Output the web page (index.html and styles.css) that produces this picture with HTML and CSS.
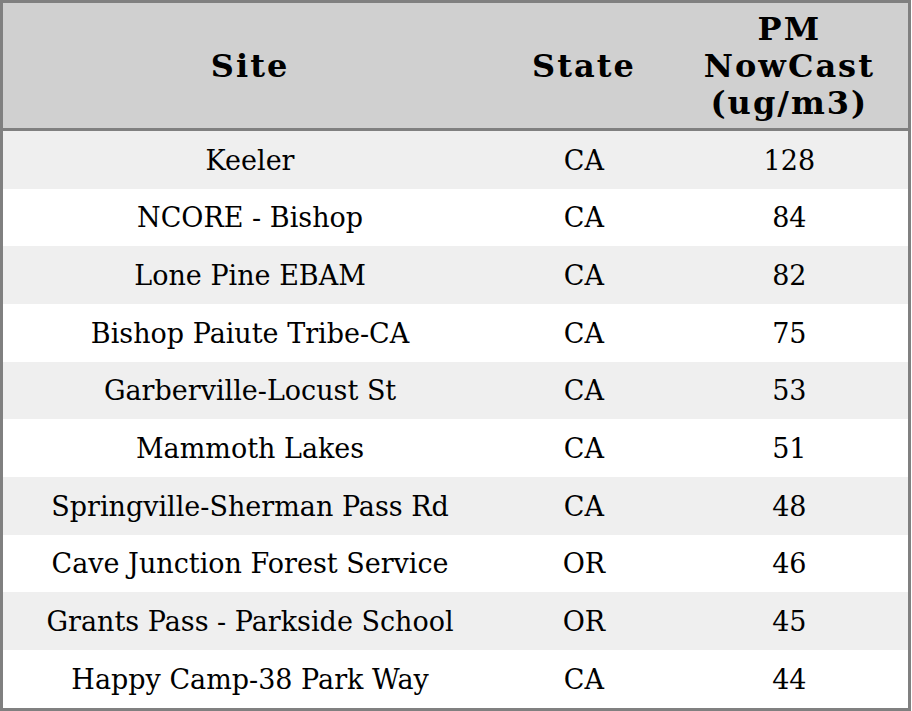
FILE: index.html
```html
<!DOCTYPE html>
<html>
<head>
<meta charset="utf-8">
<link rel="stylesheet" href="styles.css">
</head>
<body>
<table class="aq">
  <colgroup>
    <col class="c-site">
    <col class="c-state">
    <col class="c-pm">
  </colgroup>
  <thead>
    <tr><th>Site</th><th>State</th><th>PM<br>NowCast<br>(ug/m3)</th></tr>
  </thead>
  <tbody>
    <tr><td>Keeler</td><td>CA</td><td>128</td></tr>
    <tr><td>NCORE - Bishop</td><td>CA</td><td>84</td></tr>
    <tr><td>Lone Pine EBAM</td><td>CA</td><td>82</td></tr>
    <tr><td>Bishop Paiute Tribe-CA</td><td>CA</td><td>75</td></tr>
    <tr><td>Garberville-Locust St</td><td>CA</td><td>53</td></tr>
    <tr><td>Mammoth Lakes</td><td>CA</td><td>51</td></tr>
    <tr><td>Springville-Sherman Pass Rd</td><td>CA</td><td>48</td></tr>
    <tr><td>Cave Junction Forest Service</td><td>OR</td><td>46</td></tr>
    <tr><td>Grants Pass - Parkside School</td><td>OR</td><td>45</td></tr>
    <tr><td>Happy Camp-38 Park Way</td><td>CA</td><td>44</td></tr>
  </tbody>
</table>
</body>
</html>
```
FILE: styles.css
```css
html, body {
  margin: 0;
  padding: 0;
  background: #ffffff;
}
.aq {
  width: 911px;
  border-collapse: collapse;
  table-layout: fixed;
  border: 3px solid #808080;
  font-family: "DejaVu Serif", serif;
  color: #000;
}
.c-site { width: 494px; }
.c-state { width: 173px; }
.c-pm { width: 238px; }
.aq th {
  background: #d0d0d0;
  font-size: 32px;
  font-weight: bold;
  letter-spacing: 2px;
  line-height: 37.25px;
  padding: 7.6px 0 5.6px 0;
  text-align: center;
  vertical-align: middle;
  border-bottom: 3px solid #808080;
}
.aq td {
  font-size: 27px;
  line-height: 30.3px;
  padding: 14.7px 0 12.7px 0;
  text-align: center;
  vertical-align: middle;
}
.aq tbody tr:nth-child(odd) td {
  background: #efefef;
}
.aq tbody tr:nth-child(even) td {
  background: #ffffff;
}
```
